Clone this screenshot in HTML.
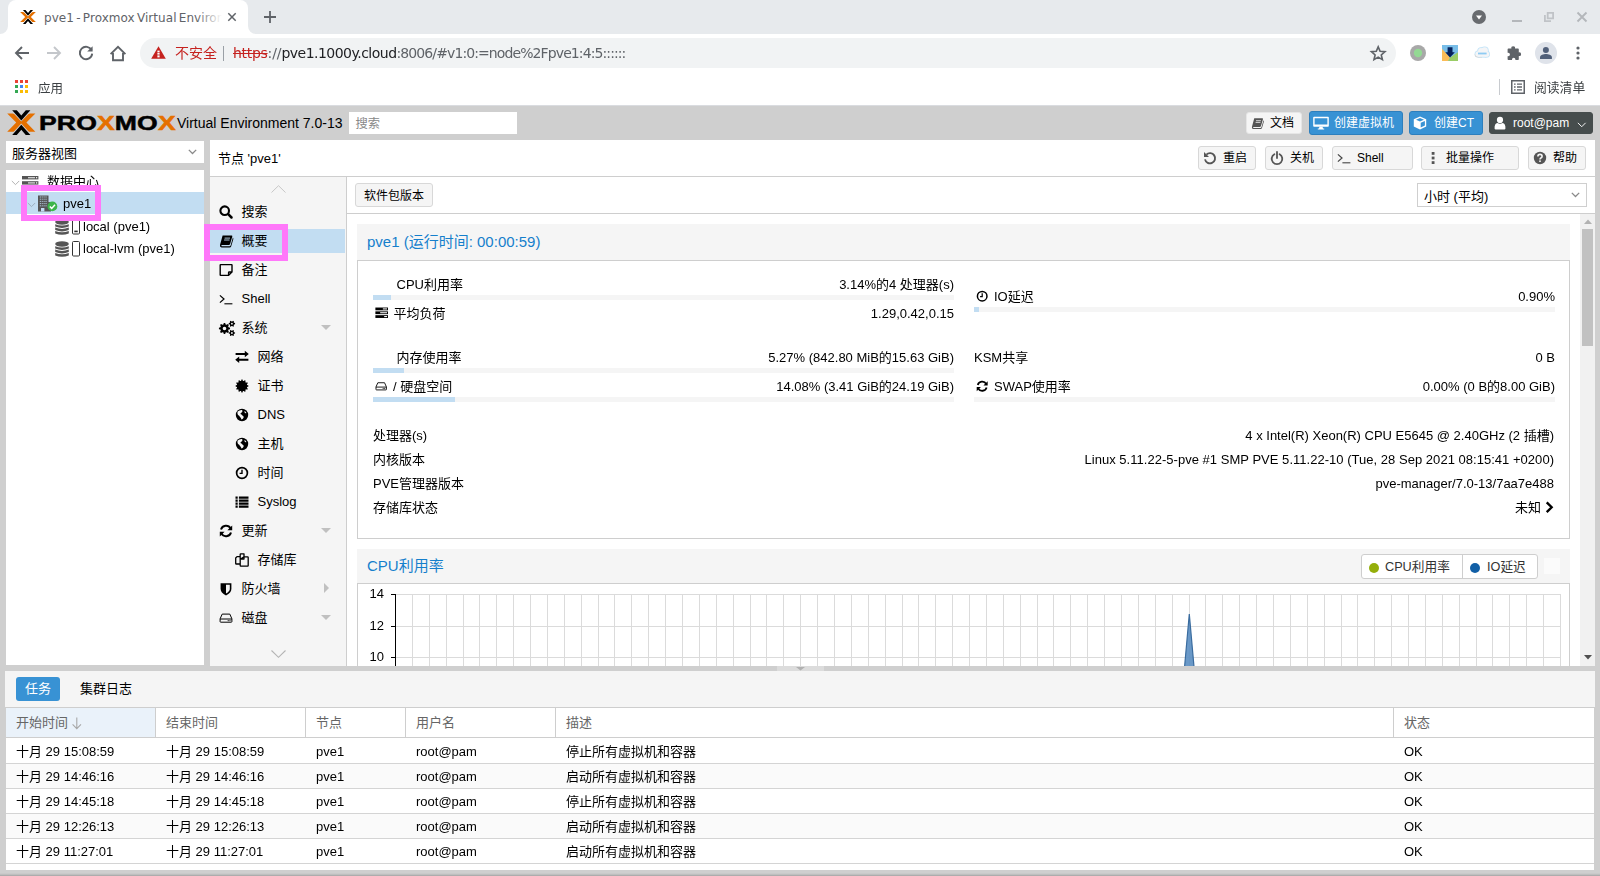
<!DOCTYPE html>
<html lang="zh-CN"><head><meta charset="utf-8"><title>pve1 - Proxmox Virtual Environment</title>
<style>
*{box-sizing:border-box;margin:0;padding:0}
html,body{width:1600px;height:876px;overflow:hidden;background:#cfcfcf}
body{font-family:"Liberation Sans","Noto Sans CJK SC",sans-serif;font-size:13px;color:#000;position:relative}
.a{position:absolute}
.t{position:absolute;white-space:nowrap;line-height:22px;height:20px}
.ui{font-family:"DejaVu Sans","Noto Sans CJK SC",sans-serif}
svg{position:absolute;overflow:visible}
.btn{position:absolute;border:1px solid #d8d8d8;background:#f5f5f5;border-radius:3px}
.bar{position:absolute;height:5px;background:#f5f5f5}
.bar i{position:absolute;left:0;top:0;height:5px;background:#c2ddf2;display:block}
.r{text-align:right}
.g{will-change:transform}
.row{position:absolute;left:6px;width:1588px;height:25px;background:#fff}
.row.alt{background:#fafafa}
.row span{will-change:transform;position:absolute;top:4px;line-height:20px;white-space:nowrap}
.hd{position:absolute;top:708px;height:29px;color:#666;line-height:29px;padding-left:10px;white-space:nowrap}
.mi{position:absolute;left:241.5px;white-space:nowrap;line-height:22px;height:20px}
.mi.s{left:257.5px}
</style></head><body>

<div class="a" style="left:0;top:0;width:1600px;height:34px;background:#e7eaed"></div>
<div class="a" style="left:8px;top:0;width:240px;height:34px;background:#fff;border-radius:8px 8px 0 0"></div>
<svg style="left:0;top:26px" width="256" height="8"><path d="M0 8 A8 8 0 0 0 8 0 V8 Z M256 8 A8 8 0 0 1 248 0 V8 Z" fill="#fff"/></svg>
<svg style="left:20px;top:10px" width="16" height="14" viewBox="0 0 28.6 25.2"><path d="M5.2 0.2 H9.8 L14.3 5.4 L18.8 0.2 H23.4 L14.3 10.4 Z M5.2 25 H9.8 L14.3 19.8 L18.8 25 H23.4 L14.3 14.8 Z" fill="#000"/><path d="M0.2 3.4 H5.4 Q6.6 3.4 7.4 4.3 L14.3 11.6 L21.2 4.3 Q22 3.4 23.2 3.4 H28.4 L19.4 12.6 L28.4 21.8 H23.2 Q22 21.8 21.2 20.9 L14.3 13.6 L7.4 20.9 Q6.6 21.8 5.4 21.8 H0.2 L9.2 12.6 Z" fill="#e57000"/><path d="M12.2 10.4 L14.3 12.6 L16.4 10.4 L14.3 8.2 Z M12.2 14.8 L14.3 12.6 L16.4 14.8 L14.3 17 Z" fill="#000" opacity="0"/></svg>
<div class="t" style="left:44px;top:7px;width:178px;overflow:hidden;font-size:12px;color:#5f6368;font-family:'DejaVu Sans','Noto Sans CJK SC',sans-serif;letter-spacing:0.05px;word-spacing:-1.6px">pve1 - Proxmox Virtual Environment</div>
<div class="a" style="left:196px;top:4px;width:26px;height:26px;background:linear-gradient(90deg,rgba(255,255,255,0),#fff)"></div>
<svg style="left:228px;top:13px" width="8" height="8"><path d="M0.3 0.3 L7.7 7.7 M7.7 0.3 L0.3 7.7" stroke="#5f6368" stroke-width="1.5" fill="none"/></svg>
<svg style="left:263px;top:10px" width="14" height="14"><path d="M7 1 V13 M1 7 H13" stroke="#5f6368" stroke-width="1.8" fill="none"/></svg>
<!-- window controls -->
<svg style="left:1472px;top:10px" width="14" height="14"><circle cx="7" cy="7" r="7" fill="#686b6f"/><path d="M4 5.4 H10 L7 9.4 Z" fill="#fff"/></svg>
<div class="a" style="left:1512px;top:20px;width:10px;height:2px;background:#b4b7bb"></div>
<svg style="left:1544px;top:12px" width="10" height="10"><path d="M3.7 0.9 H9.1 V6.3 H3.7 Z" stroke="#c0c3c7" stroke-width="1.8" fill="none"/><path d="M0.9 3 V9.1 H7" stroke="#c0c3c7" stroke-width="1.8" fill="none"/></svg>
<svg style="left:1577px;top:12px" width="10" height="10"><path d="M0.5 0.5 L9.5 9.5 M9.5 0.5 L0.5 9.5" stroke="#b4b7bb" stroke-width="1.9" fill="none"/></svg>

<div class="a" style="left:0;top:34px;width:1600px;height:72px;background:#fff"></div>
<div class="a" style="left:0;top:105px;width:1600px;height:1px;background:#dadce0"></div>
<!-- nav buttons -->
<svg style="left:14px;top:45px" width="16" height="16"><path d="M15 8 H2.5 M8 2 L2 8 L8 14" stroke="#5f6368" stroke-width="1.9" fill="none"/></svg>
<svg style="left:46px;top:45px" width="16" height="16"><path d="M1 8 H13.5 M8 2 L14 8 L8 14" stroke="#c4c7cb" stroke-width="1.9" fill="none"/></svg>
<svg style="left:78px;top:45px" width="16" height="16"><path d="M13.6 5.2 A6.2 6.2 0 1 0 14.2 8.6" stroke="#5f6368" stroke-width="1.9" fill="none"/><path d="M14.6 1.2 V6.6 H9.2 Z" fill="#5f6368"/></svg>
<svg style="left:109px;top:44.5px" width="18" height="18"><path d="M1.6 9.2 L9 1.8 L16.4 9.2 M4 8 V15.2 H14 V8" stroke="#5f6368" stroke-width="1.9" fill="none" stroke-linejoin="miter"/></svg>
<!-- omnibox -->
<div class="a" style="left:140px;top:38px;width:1256px;height:30px;border-radius:15px;background:#f1f3f4"></div>
<svg style="left:151px;top:46px" width="15" height="13" viewBox="0 0 15 13"><path d="M7.5 0.3 L14.8 12.7 H0.2 Z" fill="#c5221f"/><rect x="6.4" y="4.6" width="2.2" height="1.8" fill="#fff"/><rect x="6.4" y="7" width="2.2" height="1.6" fill="#fff"/><rect x="6.4" y="9.4" width="2.2" height="2" fill="#fff"/></svg>
<div class="t g" style="left:175px;top:41px;font-size:14px;color:#c5221f;font-family:'Noto Sans CJK SC',sans-serif">不安全</div>
<div class="a" style="left:223px;top:46px;width:1px;height:15px;background:#9aa0a6"></div>
<div class="t g" id="url" style="left:233px;top:42px;font-size:14px;color:#5f6368;font-family:'DejaVu Sans',sans-serif;letter-spacing:-0.9px"><span style="color:#c5221f;text-decoration:line-through;letter-spacing:-0.3px">https</span><span style="letter-spacing:-0.1px">://</span><span style="color:#202124;letter-spacing:-0.52px">pve1.1000y.cloud</span>:8006/#v1:0:=node%2Fpve1:4:5::::::</div>
<svg style="left:1369.8px;top:45px" width="16.4" height="16.4" viewBox="0 0 18 18"><path d="M9 2 L11.1 6.9 L16.4 7.4 L12.4 10.9 L13.6 16.1 L9 13.3 L4.4 16.1 L5.6 10.9 L1.6 7.4 L6.9 6.9 Z" stroke="#5f6368" stroke-width="1.8" fill="none" stroke-linejoin="miter"/></svg>
<!-- extensions -->
<svg style="left:1410px;top:45px" width="16" height="16"><circle cx="8" cy="8" r="8" fill="#a8a8a8"/><circle cx="8" cy="8" r="4.2" fill="#93d993"/></svg>
<svg style="left:1442px;top:45px" width="16" height="16" viewBox="0 0 16 16"><rect width="16" height="16" fill="#78bde8"/><path d="M0 3.8 L8 12.5 L6.2 16 H0 Z" fill="#fbbc58"/><path d="M16 7.2 L8 12.5 L6.2 16 H16 Z" fill="#9acd66"/><path d="M5.6 2.2 H10.5 V7.2 H12.8 L8 12.6 L3.3 7.2 H5.6 Z" fill="#04205a"/></svg>
<svg style="left:1474px;top:46px" width="16" height="12" viewBox="0 0 16 12"><circle cx="4.2" cy="8" r="3.60" fill="#bfe3f8"/><circle cx="7" cy="5" r="3.70" fill="#bfe3f8"/><circle cx="10.6" cy="4.6" r="4.10" fill="#bfe3f8"/><circle cx="12.6" cy="8.2" r="3.40" fill="#bfe3f8"/><rect x="4.20" y="5.50" width="8.40" height="6.10" fill="#bfe3f8"/><path d="M0.6 8 A3.6 3.6 0 0 0 4.2 11.6 H8 V11.1 H4.2 Z" fill="#d4d4d4"/><circle cx="4.2" cy="8" r="2.80" fill="#f4f5f7"/><circle cx="7" cy="5" r="2.90" fill="#f4f5f7"/><circle cx="10.6" cy="4.6" r="3.30" fill="#f4f5f7"/><circle cx="12.6" cy="8.2" r="2.60" fill="#f4f5f7"/><rect x="4.20" y="6.30" width="8.40" height="4.50" fill="#f4f5f7"/><rect x="4" y="6.6" width="8.6" height="1.8" fill="#8ecbf3"/></svg>
<svg style="left:1506.5px;top:45.5px" width="15" height="15" viewBox="0 0 15 15"><path d="M4.4 2.6 A1.85 1.85 0 1 1 8 2.6 H11 Q11.8 2.6 11.8 3.4 V6.4 A1.85 1.85 0 1 1 11.8 10 V13.2 Q11.8 14 11 14 H8.4 V13.4 A1.7 1.7 0 1 0 5 13.4 V14 H1.4 Q0.6 14 0.6 13.2 V10.2 H1.2 A1.75 1.75 0 1 0 1.2 6.7 H0.6 V3.4 Q0.6 2.6 1.4 2.6 Z" fill="#5f6368"/></svg>
<svg style="left:1535px;top:42px" width="22" height="22"><circle cx="11" cy="11" r="11" fill="#dfe3ea"/><circle cx="10.9" cy="7.9" r="3" fill="#51607a"/><path d="M5 17 V15.4 C5 13 8.6 12 10.9 12 C13.2 12 16.9 13 16.9 15.4 V17 Z" fill="#51607a"/></svg>
<svg style="left:1576.4px;top:46px" width="4" height="16"><circle cx="2" cy="2" r="1.6" fill="#5f6368"/><circle cx="2" cy="7" r="1.6" fill="#5f6368"/><circle cx="2" cy="12" r="1.6" fill="#5f6368"/></svg>
<!-- bookmarks -->
<svg style="left:15px;top:80px" width="13" height="13"><rect x="0" y="0" width="3" height="3" fill="#ea4335"/><rect x="5" y="0" width="3" height="3" fill="#ea4335"/><rect x="10" y="0" width="3" height="3" fill="#ea4335"/><rect x="0" y="5" width="3" height="3" fill="#34a853"/><rect x="5" y="5" width="3" height="3" fill="#4285f4"/><rect x="10" y="5" width="3" height="3" fill="#fbbc04"/><rect x="0" y="10" width="3" height="3" fill="#34a853"/><rect x="5" y="10" width="3" height="3" fill="#fbbc04"/><rect x="10" y="10" width="3" height="3" fill="#fbbc04"/></svg>
<div class="t g" style="left:38px;top:77px;font-size:12.5px;color:#3c4043;font-family:'Noto Sans CJK SC',sans-serif">应用</div>
<div class="a" style="left:1499px;top:79px;width:1px;height:16px;background:#c8cbcf"></div>
<svg style="left:1511px;top:80px" width="14" height="14"><rect x="0.75" y="0.75" width="12.5" height="12.5" stroke="#5f6368" stroke-width="1.5" fill="none"/><path d="M3 4.2 H4.6 M6 4.2 H11 M3 7 H4.6 M6 7 H11 M3 9.8 H4.6 M6 9.8 H11" stroke="#5f6368" stroke-width="1.3"/></svg>
<div class="t g" style="left:1534px;top:76px;font-size:12.8px;color:#3c4043;font-family:'Noto Sans CJK SC',sans-serif">阅读清单</div>
<div class="a" style="left:0;top:106px;width:1600px;height:770px;background:#cfcfcf"></div><svg style="left:7px;top:110px" width="28.6" height="25.2" viewBox="0 0 28.6 25.2"><path d="M5.2 0.2 H9.8 L14.3 5.4 L18.8 0.2 H23.4 L14.3 10.4 Z M5.2 25 H9.8 L14.3 19.8 L18.8 25 H23.4 L14.3 14.8 Z" fill="#000"/><path d="M0.2 3.4 H5.4 Q6.6 3.4 7.4 4.3 L14.3 11.6 L21.2 4.3 Q22 3.4 23.2 3.4 H28.4 L19.4 12.6 L28.4 21.8 H23.2 Q22 21.8 21.2 20.9 L14.3 13.6 L7.4 20.9 Q6.6 21.8 5.4 21.8 H0.2 L9.2 12.6 Z" fill="#e57000"/><path d="M12.2 10.4 L14.3 12.6 L16.4 10.4 L14.3 8.2 Z M12.2 14.8 L14.3 12.6 L16.4 14.8 L14.3 17 Z" fill="#000" opacity="0"/></svg><div class="t" id="logo" style="left:39px;top:108px;height:30px;line-height:30px;font-size:20.6px;font-weight:bold;transform-origin:0 50%;transform:scaleX(1.29);letter-spacing:0.1px;-webkit-text-stroke:0.5px #000;font-family:'Liberation Sans',sans-serif">PRO<span style="color:#e57000;-webkit-text-stroke:0.5px #e57000">X</span>MO<span style="color:#e57000;-webkit-text-stroke:0.5px #e57000">X</span></div><div class="t" id="ve" style="left:177px;top:112px;font-size:14px">Virtual Environment 7.0-13</div><div class="a" style="left:349px;top:112px;width:168px;height:22px;background:#fff"></div><div class="t" style="left:355.5px;top:112.6px;font-size:12.3px;color:#888">搜索</div><div class="btn" style="left:1246px;top:112px;width:56px;height:22px;border-color:#e6e6e6"></div><svg style="left:1250.5px;top:116.5px" width="12.6" height="12.6" viewBox="0 0 14 14"><path d="M3.6 1.5 H12.6 Q13.6 1.5 13.3 2.6 L11 10.2 Q10.7 11 9.8 11 H2.6 Q2.2 11.6 2.6 12.2 H10.6 Q11.3 12.2 11.6 11.4 L13.9 3.6 Q14.6 4.2 14.3 5.2 L12.2 12.2 Q11.8 13.4 10.6 13.4 H2.6 Q0.6 13.2 1 11 Z" fill="#555"/><path d="M5.6 4.1 H11 M5.1 6 H10.5" stroke="#f5f5f5" stroke-width="0.9"/></svg><div class="t" style="left:1270px;top:112px;font-size:12px">文档</div><div class="btn" style="left:1309px;top:111px;width:94px;height:24px;background:#3892d4;border-color:#2d7fbd"></div><svg style="left:1313px;top:116px" width="16" height="14" viewBox="0 0 16 14"><path d="M1 0.8 H15 Q15.8 0.8 15.8 1.6 V10 Q15.8 10.8 15 10.8 H1 Q0.2 10.8 0.2 10 V1.6 Q0.2 0.8 1 0.8 Z M1.6 2.2 V8.4 H14.4 V2.2 Z" fill="#fff" fill-rule="evenodd"/><path d="M6.4 10.8 H9.6 L10 12.6 H11.2 V13.6 H4.8 V12.6 H6 Z" fill="#fff"/></svg><div class="t" style="left:1334px;top:112px;font-size:12px;color:#fff">创建虚拟机</div><div class="btn" style="left:1409px;top:111px;width:74px;height:24px;background:#3892d4;border-color:#2d7fbd"></div><svg style="left:1413px;top:116px" width="14" height="14" viewBox="0 0 14 14"><path d="M7 0.6 L13.2 3.2 V10.4 L7 13.4 L0.8 10.4 V3.2 Z" fill="#fff"/><path d="M7 2.1 L11 3.8 L7 5.5 L3 3.8 Z" fill="#3892d4"/><path d="M7.7 6.8 L11.9 5 V9.6 L7.7 11.6 Z" fill="#3892d4"/></svg><div class="t" id="ct" style="left:1434px;top:112px;font-size:12px;color:#fff">创建CT</div><div class="btn" style="left:1489px;top:112px;width:104px;height:22px;background:#464d4d;border-color:#464d4d"></div><svg style="left:1493px;top:116px" width="14" height="14" viewBox="0 0 14 14"><circle cx="7" cy="3.9" r="3.1" fill="#fff"/><path d="M1.6 12.8 Q1.2 7.4 4.4 7 Q7 8.6 9.6 7 Q12.8 7.4 12.4 12.8 Q12.2 13.4 11.4 13.4 H2.6 Q1.8 13.4 1.6 12.8 Z" fill="#fff"/></svg><div class="t" style="left:1513px;top:112px;font-size:12px;color:#fff">root@pam</div><svg style="left:1576.5px;top:122px" width="9.5" height="6" viewBox="0 0 11 7"><path d="M1 1 L5.5 5.5 L10 1" stroke="#fff" stroke-width="1.1" fill="none"/></svg><div class="a" style="left:6px;top:141px;width:198px;height:22px;background:#fff"></div><div class="t" style="left:12px;top:143px">服务器视图</div><svg style="left:188.3px;top:149.4px" width="9" height="5.8" viewBox="0 0 11 7"><path d="M1 1 L5.5 5.5 L10 1" stroke="#8a8a8a" stroke-width="1.6" fill="none"/></svg><div class="a" style="left:6px;top:170px;width:198px;height:495px;background:#fff"></div><div class="t g" style="left:47px;top:171px">数据中心</div><svg style="left:21.6px;top:175.5px" width="16.4" height="14" viewBox="0 0 16.4 14"><rect x="0" y="0" width="16.4" height="3.4" fill="#555"/><rect x="0" y="5.2" width="16.4" height="3.4" fill="#555"/><rect x="0" y="10.4" width="16.4" height="3.4" fill="#555"/><rect x="6" y="1.1" width="7" height="1.2" fill="#ddd"/><rect x="6" y="6.3" width="7" height="1.2" fill="#ddd"/><rect x="6" y="11.5" width="7" height="1.2" fill="#ddd"/><rect x="14" y="1.1" width="1.2" height="1.2" fill="#fff"/><rect x="14" y="6.3" width="1.2" height="1.2" fill="#fff"/></svg><svg style="left:11px;top:180px" width="9" height="6" viewBox="0 0 11 7"><path d="M1 1 L5.5 5.5 L10 1" stroke="#aaa" stroke-width="1.1" fill="none"/></svg><div class="a" style="left:6px;top:192px;width:198px;height:22px;background:#c2ddf2"></div><svg style="left:27px;top:201.5px" width="9" height="6" viewBox="0 0 11 7"><path d="M1 1 L5.5 5.5 L10 1" stroke="#9ab" stroke-width="1.1" fill="none"/></svg><svg style="left:38px;top:195px" width="20" height="17" viewBox="0 0 20 17"><path d="M0 0.5 H10.5 V7 H13 V16.5 H0 Z" fill="#555"/><path d="M1.8 2 H8.7 M1.8 4.2 H8.7 M1.8 6.4 H8.7 M1.8 8.6 H8.7 M1.8 10.8 H8.7" stroke="#c2ddf2" stroke-width="0.8"/><path d="M3.5 1.2 V11.6 M5.3 1.2 V11.6 M7.1 1.2 V11.6" stroke="#555" stroke-width="0.7"/><rect x="3" y="13" width="3.4" height="3.5" fill="#c2ddf2"/><circle cx="14.4" cy="11.4" r="4.9" fill="#3cb54a"/><path d="M11.8 11.5 L13.7 13.4 L17 9.8" stroke="#fff" stroke-width="1.5" fill="none"/></svg><div class="t g" style="left:63px;top:193px">pve1</div><svg style="left:55px;top:219px" width="26" height="16" viewBox="0 0 26 16"><ellipse cx="7" cy="3" rx="6.8" ry="2.7" fill="#555"/><path d="M0.2 5.2 Q7 7.8 13.8 5.2 V7.6 Q7 10.4 0.2 7.6 Z" fill="#555"/><path d="M0.2 8.6 Q7 11.2 13.8 8.6 V11.0 Q7 13.8 0.2 11.0 Z" fill="#555"/><path d="M0.2 12.0 Q7 14.6 13.8 12.0 V14.4 Q7 17.2 0.2 14.4 Z" fill="#555"/><rect x="17.5" y="0.5" width="7" height="14.5" rx="1" stroke="#333" stroke-width="1" fill="#fff"/><rect x="19.3" y="11.6" width="3.4" height="1.6" fill="#333"/></svg><div class="t g" style="left:83px;top:216px">local (pve1)</div><svg style="left:55px;top:241px" width="26" height="16" viewBox="0 0 26 16"><ellipse cx="7" cy="3" rx="6.8" ry="2.7" fill="#555"/><path d="M0.2 5.2 Q7 7.8 13.8 5.2 V7.6 Q7 10.4 0.2 7.6 Z" fill="#555"/><path d="M0.2 8.6 Q7 11.2 13.8 8.6 V11.0 Q7 13.8 0.2 11.0 Z" fill="#555"/><path d="M0.2 12.0 Q7 14.6 13.8 12.0 V14.4 Q7 17.2 0.2 14.4 Z" fill="#555"/><rect x="17.5" y="0.5" width="7" height="14.5" rx="1" stroke="#333" stroke-width="1" fill="#fff"/></svg><div class="t g" style="left:83px;top:238px">local-lvm (pve1)</div><div class="a" style="left:210px;top:140px;width:1385px;height:526px;background:#fff"></div><div class="t" style="left:218px;top:148px">节点 'pve1'</div><div class="a" style="left:210px;top:176px;width:1385px;height:1px;background:#cecece"></div><div class="btn" style="left:1198px;top:146px;width:58px;height:24px"></div><svg style="left:1203px;top:151px" width="14" height="14" viewBox="0 0 14 14"><path d="M3.4 3.6 A5.1 5.1 0 1 1 2 8.4" stroke="#555" stroke-width="1.9" fill="none"/><path d="M1 1 V6 H6 Z" fill="#555"/></svg><div class="t" style="left:1223px;top:147px;font-size:12px">重启</div><div class="btn" style="left:1265px;top:146px;width:58px;height:24px"></div><svg style="left:1270px;top:151px" width="14" height="14" viewBox="0 0 14 14"><path d="M4.4 3.2 A5.3 5.3 0 1 0 9.6 3.2" stroke="#555" stroke-width="1.8" fill="none" stroke-linecap="round"/><path d="M7 1 V7" stroke="#555" stroke-width="1.8" stroke-linecap="round"/></svg><div class="t" style="left:1290px;top:147px;font-size:12px">关机</div><div class="btn" style="left:1332px;top:146px;width:81px;height:24px"></div><svg style="left:1337px;top:151px" width="14" height="14" viewBox="0 0 14 14"><path d="M0.9 3.4 L5 7 L0.9 10.6" stroke="#444" stroke-width="1.2" fill="none"/><path d="M5.4 11.8 H13.4" stroke="#444" stroke-width="1.1"/></svg><div class="t" style="left:1357px;top:147px;font-size:12px">Shell</div><div class="btn" style="left:1421px;top:146px;width:98px;height:24px"></div><svg style="left:1426px;top:151px" width="14" height="14" viewBox="0 0 14 14"><rect x="5.7" y="1" width="2.8" height="2.8" fill="#555"/><rect x="5.7" y="5.6" width="2.8" height="2.8" fill="#555"/><rect x="5.7" y="10.2" width="2.8" height="2.8" fill="#555"/></svg><div class="t" style="left:1446px;top:147px;font-size:12px">批量操作</div><div class="btn" style="left:1528px;top:146px;width:58px;height:24px"></div><svg style="left:1533px;top:151px" width="14" height="14" viewBox="0 0 14 14"><circle cx="7" cy="7" r="6.2" fill="#555"/><path d="M4.9 5.4 Q4.9 3.4 7 3.4 Q9.1 3.4 9.1 5.2 Q9.1 6.4 7.9 7 Q7 7.5 7 8.4" stroke="#f5f5f5" stroke-width="1.6" fill="none"/><rect x="6.2" y="9.4" width="1.6" height="1.6" fill="#f5f5f5"/></svg><div class="t" style="left:1553px;top:147px;font-size:12px">帮助</div><div class="a" style="left:210px;top:177px;width:137px;height:489px;background:#f5f5f5;border-right:1px solid #cecece"></div><svg style="left:271px;top:185px" width="15" height="8"><path d="M0.5 7.5 L7.5 0.7 L14.5 7.5" stroke="#c8c8c8" stroke-width="1" fill="none"/></svg><svg style="left:271px;top:650px" width="15" height="8"><path d="M0.5 0.5 L7.5 7.3 L14.5 0.5" stroke="#b4b4b4" stroke-width="1.1" fill="none"/></svg><div class="a" style="left:210px;top:229px;width:135px;height:24px;background:#c2ddf2"></div><svg style="left:219px;top:204.7px" width="14" height="14" viewBox="0 0 14 14"><circle cx="5.7" cy="5.7" r="4.3" stroke="#000" stroke-width="2.1" fill="none"/><path d="M9.2 9.2 L12.5 12.5" stroke="#000" stroke-width="2.5" stroke-linecap="round"/></svg><div class="mi" style="top:201px">搜索</div><svg style="left:219px;top:233.7px" width="14" height="14" viewBox="0 0 14 14"><path d="M3.6 1.5 H12.6 Q13.6 1.5 13.3 2.6 L11 10.2 Q10.7 11 9.8 11 H2.6 Q2.2 11.6 2.6 12.2 H10.6 Q11.3 12.2 11.6 11.4 L13.9 3.6 Q14.6 4.2 14.3 5.2 L12.2 12.2 Q11.8 13.4 10.6 13.4 H2.6 Q0.6 13.2 1 11 Z" fill="#000"/><path d="M5.6 4.1 H11 M5.1 6 H10.5" stroke="#c2ddf2" stroke-width="0.9"/></svg><div class="mi" style="top:230px">概要</div><svg style="left:219px;top:262.7px" width="14" height="14" viewBox="0 0 14 14"><path d="M1.6 1.6 H12.6 Q13 1.6 13 2 V9 L9.6 12.4 H1.6 Q1.2 12.4 1.2 12 V2 Q1.2 1.6 1.6 1.6 Z M12.8 9 H10.2 Q9.6 9 9.6 9.6 V12.2" stroke="#000" stroke-width="1.4" fill="none"/></svg><div class="mi" style="top:259px">备注</div><svg style="left:219px;top:291.7px" width="14" height="14" viewBox="0 0 14 14"><path d="M0.9 3.4 L5 7 L0.9 10.6" stroke="#000" stroke-width="1.2" fill="none"/><path d="M5.4 11.8 H13.4" stroke="#000" stroke-width="1.1"/></svg><div class="mi" style="top:288px">Shell</div><svg style="left:218.5px;top:319.5px" width="16" height="16" viewBox="0 0 14 14"><path d="M9.66 6.79 L9.66 8.01 L8.37 8.38 L8.01 9.23 L8.67 10.40 L7.80 11.27 L6.63 10.61 L5.78 10.97 L5.41 12.26 L4.19 12.26 L3.82 10.97 L2.97 10.61 L1.80 11.27 L0.93 10.40 L1.59 9.23 L1.23 8.38 L-0.06 8.01 L-0.06 6.79 L1.23 6.42 L1.59 5.57 L0.93 4.40 L1.80 3.53 L2.97 4.19 L3.82 3.83 L4.19 2.54 L5.41 2.54 L5.78 3.83 L6.63 4.19 L7.80 3.53 L8.67 4.40 L8.01 5.57 L8.37 6.42 Z M3.20 7.40 a1.60 1.60 0 1 0 3.20 0 a1.60 1.60 0 1 0 -3.20 0 Z" fill="#000" fill-rule="evenodd"/><path d="M14.06 2.73 L14.06 3.67 L13.17 3.90 L12.84 4.47 L13.08 5.36 L12.28 5.82 L11.63 5.17 L10.97 5.17 L10.32 5.82 L9.52 5.36 L9.76 4.47 L9.43 3.90 L8.54 3.67 L8.54 2.73 L9.43 2.50 L9.76 1.93 L9.52 1.04 L10.32 0.58 L10.97 1.23 L11.63 1.23 L12.28 0.58 L13.08 1.04 L12.84 1.93 L13.17 2.50 Z M10.50 3.20 a0.80 0.80 0 1 0 1.60 0 a0.80 0.80 0 1 0 -1.60 0 Z" fill="#000" fill-rule="evenodd"/><path d="M14.06 10.93 L14.06 11.87 L13.17 12.10 L12.84 12.67 L13.08 13.56 L12.28 14.02 L11.63 13.37 L10.97 13.37 L10.32 14.02 L9.52 13.56 L9.76 12.67 L9.43 12.10 L8.54 11.87 L8.54 10.93 L9.43 10.70 L9.76 10.13 L9.52 9.24 L10.32 8.78 L10.97 9.43 L11.63 9.43 L12.28 8.78 L13.08 9.24 L12.84 10.13 L13.17 10.70 Z M10.50 11.40 a0.80 0.80 0 1 0 1.60 0 a0.80 0.80 0 1 0 -1.60 0 Z" fill="#000" fill-rule="evenodd"/></svg><div class="mi" style="top:317px">系统</div><svg style="left:321px;top:325px" width="10" height="5"><path d="M0 0 H10 L5 5 Z" fill="#c0c0c0"/></svg><svg style="left:235px;top:349.7px" width="14" height="14" viewBox="0 0 14 14"><path d="M0.6 4 H10.5 M3.5 9.8 H13.4" stroke="#000" stroke-width="2"/><path d="M9.8 0.8 L13.8 4 L9.8 7.2 Z M4.2 6.6 L0.2 9.8 L4.2 13 Z" fill="#000"/></svg><div class="mi s" style="top:346px">网络</div><svg style="left:235px;top:378.7px" width="14" height="14" viewBox="0 0 14 14"><path d="M13.38 6.46 L13.38 7.54 L12.12 7.92 L11.89 8.76 L12.79 9.72 L12.26 10.65 L10.97 10.36 L10.36 10.97 L10.65 12.26 L9.72 12.79 L8.76 11.89 L7.92 12.12 L7.54 13.38 L6.46 13.38 L6.08 12.12 L5.24 11.89 L4.28 12.79 L3.35 12.26 L3.64 10.97 L3.03 10.36 L1.74 10.65 L1.21 9.72 L2.11 8.76 L1.88 7.92 L0.62 7.54 L0.62 6.46 L1.88 6.08 L2.11 5.24 L1.21 4.28 L1.74 3.35 L3.03 3.64 L3.64 3.03 L3.35 1.74 L4.28 1.21 L5.24 2.11 L6.08 1.88 L6.46 0.62 L7.54 0.62 L7.92 1.88 L8.76 2.11 L9.72 1.21 L10.65 1.74 L10.36 3.03 L10.97 3.64 L12.26 3.35 L12.79 4.28 L11.89 5.24 L12.12 6.08 Z M6.99 7.00 a0.01 0.01 0 1 0 0.02 0 a0.01 0.01 0 1 0 -0.02 0 Z" fill="#000" fill-rule="evenodd"/></svg><div class="mi s" style="top:375px">证书</div><svg style="left:235px;top:407.7px" width="14" height="14" viewBox="0 0 14 14"><circle cx="7" cy="7" r="6.2" fill="#000"/><path d="M2.6 3.6 Q4.6 1.8 7 2 Q8 3 7 4.2 Q5.6 4.6 5.4 6 Q6.6 6.4 7.4 7.6 Q9 8.2 8.6 9.8 Q7.6 11.4 6.4 11.6 Q6.2 9.8 5 9 Q4.4 7.6 3 7 Q2 5.4 2.6 3.6 Z M9.4 3 Q10.8 3.6 11.4 5 Q10.4 5.6 9.6 4.6 Z" fill="#f5f5f5"/></svg><div class="mi s" style="top:404px">DNS</div><svg style="left:235px;top:436.7px" width="14" height="14" viewBox="0 0 14 14"><circle cx="7" cy="7" r="6.2" fill="#000"/><path d="M2.6 3.6 Q4.6 1.8 7 2 Q8 3 7 4.2 Q5.6 4.6 5.4 6 Q6.6 6.4 7.4 7.6 Q9 8.2 8.6 9.8 Q7.6 11.4 6.4 11.6 Q6.2 9.8 5 9 Q4.4 7.6 3 7 Q2 5.4 2.6 3.6 Z M9.4 3 Q10.8 3.6 11.4 5 Q10.4 5.6 9.6 4.6 Z" fill="#f5f5f5"/></svg><div class="mi s" style="top:433px">主机</div><svg style="left:235px;top:465.7px" width="14" height="14" viewBox="0 0 14 14"><circle cx="7" cy="7" r="5.4" stroke="#000" stroke-width="1.7" fill="none"/><path d="M7 3.8 V7.4 H4.6" stroke="#000" stroke-width="1.4" fill="none"/></svg><div class="mi s" style="top:462px">时间</div><svg style="left:235px;top:494.7px" width="14" height="14" viewBox="0 0 14 14"><path d="M0.5 2.6 H2.7 M0.5 5.6 H2.7 M0.5 8.6 H2.7 M0.5 11.6 H2.7" stroke="#000" stroke-width="2.1"/><path d="M3.9 2.6 H13.5 M3.9 5.6 H13.5 M3.9 8.6 H13.5 M3.9 11.6 H13.5" stroke="#000" stroke-width="2.1"/></svg><div class="mi s" style="top:491px">Syslog</div><svg style="left:219px;top:523.7px" width="14" height="14" viewBox="0 0 14 14"><path d="M11.6 4.6 A5.2 5.2 0 0 0 2 5.6 M2.4 9.4 A5.2 5.2 0 0 0 12 8.4" stroke="#000" stroke-width="2" fill="none"/><path d="M13.2 1.4 V6.2 H8.4 Z M0.8 12.6 V7.8 H5.6 Z" fill="#000"/></svg><div class="mi" style="top:520px">更新</div><svg style="left:321px;top:528px" width="10" height="5"><path d="M0 0 H10 L5 5 Z" fill="#c0c0c0"/></svg><svg style="left:235px;top:552.7px" width="14" height="14" viewBox="0 0 14 14"><path d="M5.2 3.6 V1.4 Q5.2 0.8 5.8 0.8 H9 L9 3.6 M5.2 3.6 H2 L0.7 5 V10.4 Q0.7 11 1.3 11 H5.2 M5.2 3.6 V11 M5.2 5.4 V12.6 Q5.2 13.2 5.8 13.2 H12.6 Q13.2 13.2 13.2 12.6 V4.4 Q13.2 3.8 12.6 3.8 H9 L5.2 6.4 Z M9 0.8 V6 H5.6" stroke="#000" stroke-width="1.3" fill="none" stroke-linejoin="round"/></svg><div class="mi s" style="top:549px">存储库</div><svg style="left:219px;top:581.7px" width="14" height="14" viewBox="0 0 14 14"><path d="M1.6 1.2 H12.4 V7 Q12.4 10.6 7 13.4 Q1.6 10.6 1.6 7 Z" fill="#000"/><path d="M7 2.8 H10.8 V7 Q10.8 9.4 7 11.6 Z" fill="#f5f5f5"/></svg><div class="mi" style="top:578px">防火墙</div><svg style="left:324px;top:583px" width="5" height="10"><path d="M0 0 V10 L5 5 Z" fill="#c0c0c0"/></svg><svg style="left:219px;top:610.7px" width="14" height="14" viewBox="0 0 14 14"><path d="M3.2 3.1 H10.8 L12.9 7.8 V10.6 Q12.9 11.2 12.3 11.2 H1.7 Q1.1 11.2 1.1 10.6 V7.8 Z M1.1 8 H12.9" stroke="#000" stroke-width="1" fill="none" stroke-linejoin="round"/><circle cx="9.2" cy="9.6" r="0.6" fill="#000"/><circle cx="11" cy="9.6" r="0.6" fill="#000"/></svg><div class="mi" style="top:607px">磁盘</div><svg style="left:321px;top:615px" width="10" height="5"><path d="M0 0 H10 L5 5 Z" fill="#c0c0c0"/></svg><div class="btn" style="left:355px;top:183px;width:78px;height:24px"></div><div class="t" style="left:364px;top:185px;font-size:12px">软件包版本</div><div class="a" style="left:1417px;top:183px;width:170px;height:24px;background:#fff;border:1px solid #cfcfcf"></div><div class="t" style="left:1424px;top:186px">小时 (平均)</div><svg style="left:1571px;top:192.3px" width="9" height="5.8" viewBox="0 0 11 7"><path d="M1 1 L5.5 5.5 L10 1" stroke="#8a8a8a" stroke-width="1.6" fill="none"/></svg><div class="a" style="left:347px;top:213px;width:1248px;height:1px;background:#cecece"></div><div class="a" style="left:1580px;top:214px;width:15px;height:452px;background:#f1f1f1"></div><div class="a" style="left:1582px;top:229px;width:11px;height:117px;background:#c1c1c1"></div><svg style="left:1584px;top:219px" width="8" height="5"><path d="M0 5 H8 L4 0.5 Z" fill="#b2b2b2"/></svg><svg style="left:1584px;top:655px" width="8" height="5"><path d="M0 0 H8 L4 4.5 Z" fill="#505050"/></svg><div class="a" style="left:357px;top:224px;width:1213px;height:36px;background:#f5f5f5"></div><div class="t" id="p1t" style="left:367px;top:231px;font-size:15px;color:#157fcc">pve1 (运行时间: 00:00:59)</div><div class="a" style="left:357px;top:260px;width:1213px;height:279px;background:#fff;border:1px solid #cecece"></div><div class="a g" style="left:0;top:0;width:1580px;height:545px"><div class="t" style="left:396.5px;top:274px">CPU利用率</div><div class="t r" style="left:554px;width:400px;top:274px">3.14%的4 处理器(s)</div><div class="bar" style="left:373px;top:295px;width:581px"><i style="width:18px"></i></div><svg style="left:374.6px;top:306.2px" width="13.4" height="13.4" viewBox="0 0 14 14"><rect x="0.4" y="1.6" width="13.2" height="2.9" fill="#000"/><rect x="0.4" y="5.6" width="13.2" height="2.9" fill="#000"/><rect x="0.4" y="9.6" width="13.2" height="2.9" fill="#000"/><rect x="8.2" y="2.5" width="4.4" height="1.1" fill="#fff"/><rect x="5.4" y="6.5" width="7.2" height="1.1" fill="#fff"/><rect x="9.6" y="10.5" width="3" height="1.1" fill="#fff"/></svg><div class="t" style="left:393.5px;top:303px">平均负荷</div><div class="t r" style="left:554px;width:400px;top:303px">1.29,0.42,0.15</div><div class="t" style="left:396.5px;top:347px">内存使用率</div><div class="t r" style="left:554px;width:400px;top:347px">5.27% (842.80 MiB的15.63 GiB)</div><div class="bar" style="left:373px;top:368px;width:581px"><i style="width:31px"></i></div><svg style="left:375px;top:379.8px" width="12.4" height="12.4" viewBox="0 0 14 14"><path d="M3.2 3.1 H10.8 L12.9 7.8 V10.6 Q12.9 11.2 12.3 11.2 H1.7 Q1.1 11.2 1.1 10.6 V7.8 Z M1.1 8 H12.9" stroke="#000" stroke-width="1" fill="none" stroke-linejoin="round"/><circle cx="9.2" cy="9.6" r="0.6" fill="#000"/><circle cx="11" cy="9.6" r="0.6" fill="#000"/></svg><div class="t" style="left:393px;top:376px">/ 硬盘空间</div><div class="t r" style="left:554px;width:400px;top:376px">14.08% (3.41 GiB的24.19 GiB)</div><div class="bar" style="left:373px;top:397px;width:581px"><i style="width:82px"></i></div><svg style="left:976px;top:289.8px" width="12.4" height="12.4" viewBox="0 0 14 14"><circle cx="7" cy="7" r="5.4" stroke="#000" stroke-width="1.7" fill="none"/><path d="M7 3.8 V7.4 H4.6" stroke="#000" stroke-width="1.4" fill="none"/></svg><div class="t" style="left:994px;top:286px">IO延迟</div><div class="t r" style="left:1155px;width:400px;top:286px">0.90%</div><div class="bar" style="left:974px;top:307px;width:581px"><i style="width:5px"></i></div><div class="t" style="left:974px;top:347px">KSM共享</div><div class="t r" style="left:1155px;width:400px;top:347px">0 B</div><svg style="left:976px;top:379.8px" width="12.4" height="12.4" viewBox="0 0 14 14"><path d="M11.6 4.6 A5.2 5.2 0 0 0 2 5.6 M2.4 9.4 A5.2 5.2 0 0 0 12 8.4" stroke="#000" stroke-width="2" fill="none"/><path d="M13.2 1.4 V6.2 H8.4 Z M0.8 12.6 V7.8 H5.6 Z" fill="#000"/></svg><div class="t" style="left:994px;top:376px">SWAP使用率</div><div class="t r" style="left:1155px;width:400px;top:376px">0.00% (0 B的8.00 GiB)</div><div class="bar" style="left:974px;top:397px;width:581px"><i style="width:0px"></i></div><div class="t" style="left:373px;top:425px">处理器(s)</div><div class="t r" style="left:854px;width:700px;top:425px">4 x Intel(R) Xeon(R) CPU E5645 @ 2.40GHz (2 插槽)</div><div class="t" style="left:373px;top:449px">内核版本</div><div class="t r" style="left:854px;width:700px;top:449px;letter-spacing:0.027px">Linux 5.11.22-5-pve #1 SMP PVE 5.11.22-10 (Tue, 28 Sep 2021 08:15:41 +0200)</div><div class="t" style="left:373px;top:473px">PVE管理器版本</div><div class="t r" style="left:854px;width:700px;top:473px">pve-manager/7.0-13/7aa7e488</div><div class="t" style="left:373px;top:497px">存储库状态</div><div class="t r" style="left:841px;width:700px;top:497px">未知</div><svg style="left:1545px;top:501px" width="8.6" height="12.5" viewBox="0 0 8 11.2"><path d="M1.6 1 L6.2 5.6 L1.6 10.2" stroke="#000" stroke-width="2.2" fill="none"/></svg></div><div class="a" style="left:357px;top:549px;width:1213px;height:35px;background:#f5f5f5"></div><div class="t" style="left:367px;top:555px;font-size:15px;color:#157fcc">CPU利用率</div><div class="a" style="left:357px;top:583px;width:1213px;height:90px;background:#fff;border:1px solid #cecece"></div><div class="a" style="left:1361px;top:554px;width:177px;height:25px;background:#fff;border:1px solid #cecece;border-radius:3px"></div><div class="a" style="left:1462px;top:555px;width:1px;height:23px;background:#cecece"></div><div class="a" style="left:1369px;top:563px;width:10px;height:10px;border-radius:5px;background:#94ae0a"></div><div class="a" style="left:1470px;top:563px;width:10px;height:10px;border-radius:5px;background:#115fa6"></div><div class="t" style="left:1385px;top:556px;font-size:12.7px;color:#333">CPU利用率</div><div class="t" style="left:1487px;top:556px;font-size:12.7px;color:#333">IO延迟</div><div class="a" style="left:1544px;top:558px;width:16px;height:16px;background:#fbfbfb"></div><div class="a g" style="left:0;top:0;width:1580px;height:666px;overflow:hidden"><svg style="left:0;top:0" width="1600" height="666" viewBox="0 0 1600 666"><path d="M412.5 594 V666 M429.5 594 V666 M446.5 594 V666 M463.5 594 V666 M479.5 594 V666 M496.5 594 V666 M513.5 594 V666 M530.5 594 V666 M547.5 594 V666 M564.5 594 V666 M581.5 594 V666 M598.5 594 V666 M614.5 594 V666 M631.5 594 V666 M648.5 594 V666 M665.5 594 V666 M682.5 594 V666 M699.5 594 V666 M716.5 594 V666 M733.5 594 V666 M750.5 594 V666 M766.5 594 V666 M783.5 594 V666 M800.5 594 V666 M817.5 594 V666 M834.5 594 V666 M851.5 594 V666 M868.5 594 V666 M885.5 594 V666 M902.5 594 V666 M918.5 594 V666 M935.5 594 V666 M952.5 594 V666 M969.5 594 V666 M986.5 594 V666 M1003.5 594 V666 M1020.5 594 V666 M1037.5 594 V666 M1053.5 594 V666 M1070.5 594 V666 M1087.5 594 V666 M1104.5 594 V666 M1121.5 594 V666 M1138.5 594 V666 M1155.5 594 V666 M1172.5 594 V666 M1189.5 594 V666 M1205.5 594 V666 M1222.5 594 V666 M1239.5 594 V666 M1256.5 594 V666 M1273.5 594 V666 M1290.5 594 V666 M1307.5 594 V666 M1324.5 594 V666 M1341.5 594 V666 M1357.5 594 V666 M1374.5 594 V666 M1391.5 594 V666 M1408.5 594 V666 M1425.5 594 V666 M1442.5 594 V666 M1459.5 594 V666 M1476.5 594 V666 M1492.5 594 V666 M1509.5 594 V666 M1526.5 594 V666 M1543.5 594 V666 M1560.5 594 V666 M396 594.5 H1561 M396 626.5 H1561 M396 657.5 H1561 " stroke="#dbdbdb" stroke-width="1" fill="none"/><path d="M395.5 594 V666 M391 594.5 H396 M391 626.5 H396 M391 657.5 H396" stroke="#000" stroke-width="1" fill="none"/><path d="M1171.5 813 L1189.3 614 L1207 813 Z" fill="#5a8ec2" fill-opacity="0.9" stroke="#3a6c9f" stroke-width="1.2"/><text x="384" y="598" text-anchor="end" font-size="13" font-family="Liberation Sans, sans-serif" fill="#000">14</text><text x="384" y="630" text-anchor="end" font-size="13" font-family="Liberation Sans, sans-serif" fill="#000">12</text><text x="384" y="661" text-anchor="end" font-size="13" font-family="Liberation Sans, sans-serif" fill="#000">10</text></svg></div><div class="a" style="left:0;top:666px;width:1600px;height:5px;background:#cfcfcf"></div><div class="a" style="left:204px;top:665px;width:6px;height:1px;background:#cfcfcf"></div><div class="a" style="left:777px;top:666px;width:47px;height:5px;background:#dcdcdc"></div><svg style="left:796px;top:667px" width="9" height="4"><path d="M0 0 H9 L4.5 3.5 Z" fill="#b0b0b0"/></svg><div class="a" style="left:6px;top:671px;width:1588px;height:199px;background:#fff"></div><div class="a" style="left:5px;top:671px;width:1590px;height:37px;background:#f5f5f5;border-bottom:1px solid #cecece"></div><div class="a" style="left:16px;top:677px;width:44px;height:24px;background:#3892d4;border-radius:3px"></div><div class="t" style="left:25px;top:678px;color:#fff">任务</div><div class="t" style="left:80px;top:678px">集群日志</div><div class="hd" style="left:6px;width:149px;background:#eaf2fa">开始时间</div><div class="hd" style="left:155px;width:150px;background:#fff;padding-left:11px">结束时间</div><div class="hd" style="left:305px;width:100px;background:#fff;padding-left:11px">节点</div><div class="hd" style="left:405px;width:150px;background:#fff;padding-left:11px">用户名</div><div class="hd" style="left:555px;width:838px;background:#fff;padding-left:11px">描述</div><div class="hd" style="left:1393px;width:201px;background:#fff;padding-left:11px">状态</div><div class="a" style="left:155px;top:708px;width:1px;height:29px;background:#cecece"></div><div class="a" style="left:305px;top:708px;width:1px;height:29px;background:#cecece"></div><div class="a" style="left:405px;top:708px;width:1px;height:29px;background:#cecece"></div><div class="a" style="left:555px;top:708px;width:1px;height:29px;background:#cecece"></div><div class="a" style="left:1393px;top:708px;width:1px;height:29px;background:#cecece"></div><svg style="left:72px;top:717px" width="10" height="13"><path d="M4.8 0.5 V11.6 M0.6 7.4 L4.8 11.6 L9 7.4" stroke="#a8a8a8" stroke-width="1.1" fill="none"/></svg><div class="a" style="left:6px;top:737px;width:1588px;height:1px;background:#cecece"></div><div class="row" style="top:738px"><span style="left:10px">十月 29 15:08:59</span><span style="left:160px">十月 29 15:08:59</span><span style="left:310px">pve1</span><span style="left:410px">root@pam</span><span style="left:560px">停止所有虚拟机和容器</span><span style="left:1398px">OK</span></div><div class="row alt" style="top:763px"><span style="left:10px">十月 29 14:46:16</span><span style="left:160px">十月 29 14:46:16</span><span style="left:310px">pve1</span><span style="left:410px">root@pam</span><span style="left:560px">启动所有虚拟机和容器</span><span style="left:1398px">OK</span></div><div class="row" style="top:788px"><span style="left:10px">十月 29 14:45:18</span><span style="left:160px">十月 29 14:45:18</span><span style="left:310px">pve1</span><span style="left:410px">root@pam</span><span style="left:560px">停止所有虚拟机和容器</span><span style="left:1398px">OK</span></div><div class="row alt" style="top:813px"><span style="left:10px">十月 29 12:26:13</span><span style="left:160px">十月 29 12:26:13</span><span style="left:310px">pve1</span><span style="left:410px">root@pam</span><span style="left:560px">启动所有虚拟机和容器</span><span style="left:1398px">OK</span></div><div class="row" style="top:838px"><span style="left:10px">十月 29 11:27:01</span><span style="left:160px">十月 29 11:27:01</span><span style="left:310px">pve1</span><span style="left:410px">root@pam</span><span style="left:560px">启动所有虚拟机和容器</span><span style="left:1398px">OK</span></div><div class="a" style="left:6px;top:763px;width:1588px;height:1px;background:#d4d4d4"></div><div class="a" style="left:6px;top:788px;width:1588px;height:1px;background:#d4d4d4"></div><div class="a" style="left:6px;top:813px;width:1588px;height:1px;background:#d4d4d4"></div><div class="a" style="left:6px;top:838px;width:1588px;height:1px;background:#d4d4d4"></div><div class="a" style="left:6px;top:863px;width:1588px;height:1px;background:#d4d4d4"></div><div class="a" style="left:0;top:870px;width:1600px;height:6px;background:#cfcfcf"></div><div class="a" style="left:0;top:873px;width:1600px;height:1px;background:#cacaca"></div><div class="a" style="left:0;top:874px;width:1600px;height:1px;background:#bfbfbf"></div><div class="a" style="left:0;top:875px;width:1600px;height:1px;background:#adadad"></div><div class="a" style="left:21px;top:185px;width:80px;height:36px;border:6px solid #ff78fa"></div><div class="a" style="left:204px;top:224px;width:84px;height:36.5px;border:6px solid #ff78fa"></div></body></html>
